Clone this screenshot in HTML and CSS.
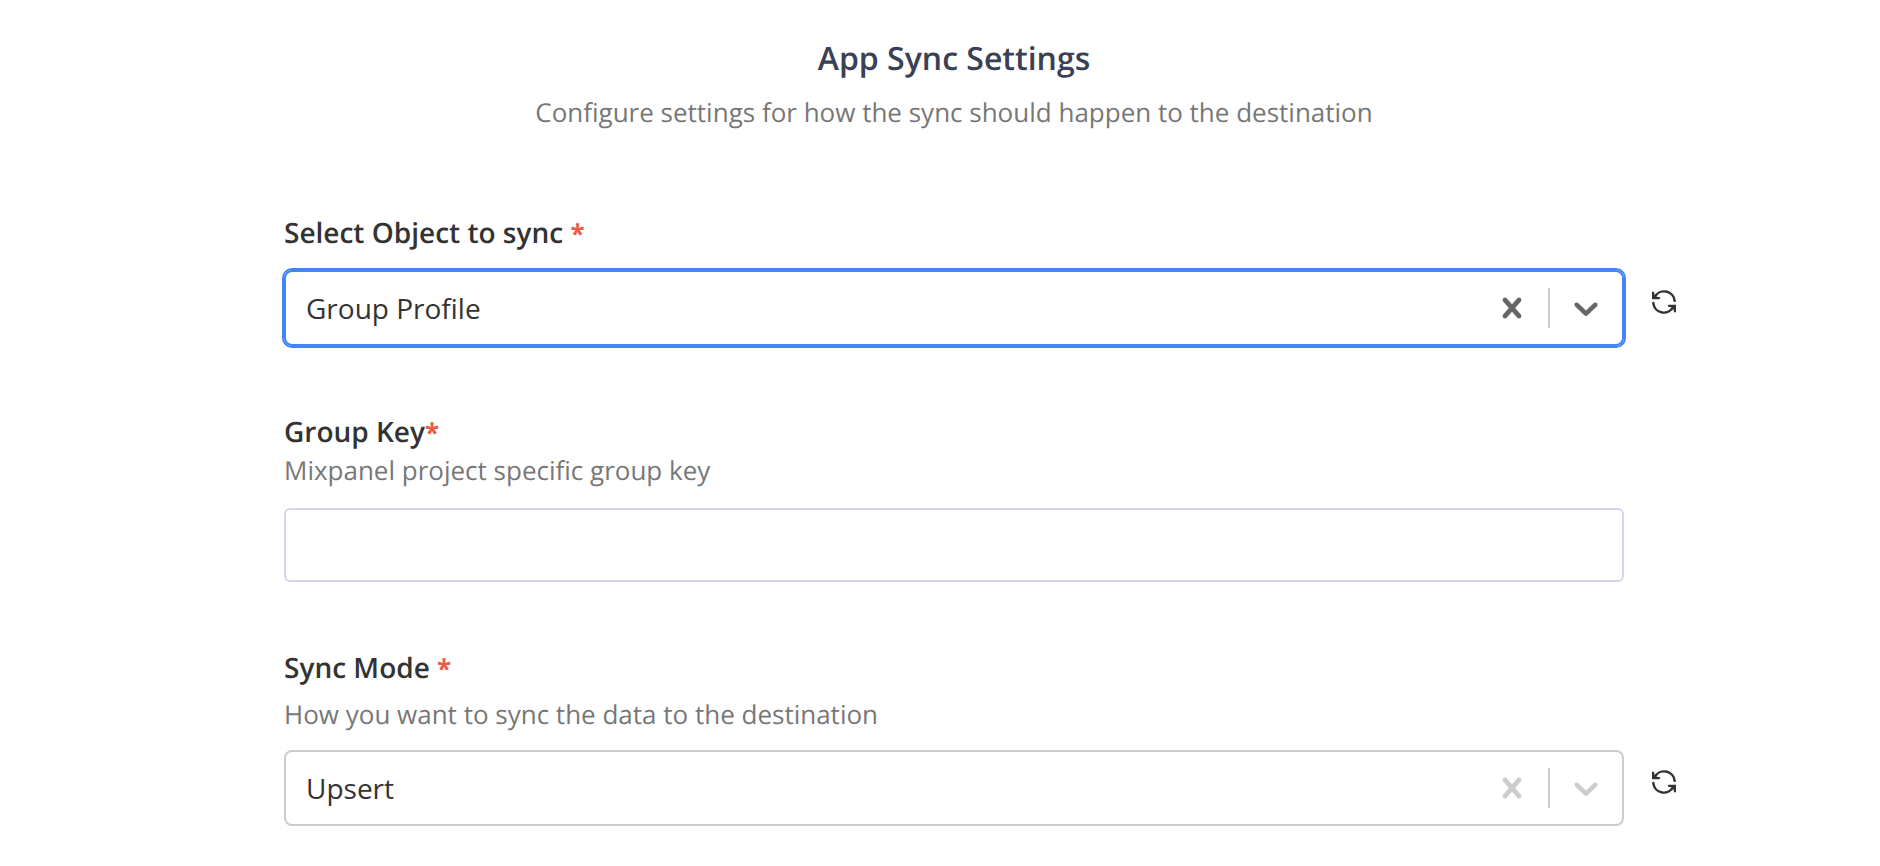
FILE: index.html
```html
<!DOCTYPE html>
<html lang="en">
<head>
<meta charset="utf-8">
<meta name="viewport" content="width=device-width, initial-scale=1">
<title>App Sync Settings</title>
<link rel="stylesheet" href="styles.css">
</head>
<body>
<svg class="sprite" aria-hidden="true">
  <symbol id="icon-clear" viewBox="0 0 20 20"><path d="M14.348 14.849c-0.469 0.469-1.229 0.469-1.697 0l-2.651-3.030-2.651 3.029c-0.469 0.469-1.229 0.469-1.697 0-0.469-0.469-0.469-1.229 0-1.697l2.758-3.15-2.759-3.152c-0.469-0.469-0.469-1.228 0-1.697s1.228-0.469 1.697 0l2.652 3.031 2.651-3.031c0.469-0.469 1.228-0.469 1.697 0s0.469 1.229 0 1.697l-2.758 3.152 2.758 3.15c0.469 0.469 0.469 1.229 0 1.698z"/></symbol>
  <symbol id="icon-down" viewBox="0 0 20 20"><path d="M4.516 7.548c0.436-0.446 1.043-0.481 1.576 0l3.908 3.747 3.908-3.747c0.533-0.481 1.141-0.446 1.574 0 0.436 0.445 0.408 1.197 0 1.615-0.406 0.418-4.695 4.502-4.695 4.502-0.217 0.223-0.502 0.335-0.787 0.335s-0.57-0.112-0.789-0.335c0 0-4.287-4.084-4.695-4.502s-0.436-1.170 0-1.615z"/></symbol>
  <symbol id="icon-sync" viewBox="0 0 24 24">
    <g fill="none" stroke="currentColor" stroke-width="2.5" stroke-linecap="round">
      <path d="M2.6 7.4A10.6 10.6 0 0 1 22.7 11"/>
      <path d="M21.4 16.6A10.6 10.6 0 0 1 1.3 13"/>
    </g>
    <path d="M0 2.4Q0 1.4 1 1.4Q2 1.4 2.2 2.4L2.6 5L4.6 6.8L7.2 7.1Q8.2 7.4 8.2 8.3Q8.1 9.2 7 9.2H0Z"/>
    <path d="M24 21.6Q24 22.6 23 22.6Q22 22.6 21.8 21.6L21.4 19L19.4 17.2L16.8 16.9Q15.8 16.6 15.8 15.7Q15.9 14.8 17 14.8H24Z"/>
  </symbol>
</svg>
<main class="page">
  <header class="heading">
    <h1 class="title">App Sync Settings</h1>
    <p class="subtitle">Configure settings for how the sync should happen to the destination</p>
  </header>

  <section class="field">
    <label class="label label-spaced" for="object">Select Object to sync <span class="required">*</span></label>
    <div class="picker picker-active">
      <select class="select" id="object"><option>Group Profile</option></select>
      <div class="indicators">
        <button class="clear" type="button" aria-label="Clear object"><svg class="icon"><use href="#icon-clear"/></svg></button>
        <span class="separator"></span>
        <span class="arrow"><svg class="icon"><use href="#icon-down"/></svg></span>
      </div>
    </div>
    <button class="refresh" type="button" aria-label="Refresh objects"><svg class="sync"><use href="#icon-sync"/></svg></button>
  </section>

  <section class="field">
    <label class="label" for="group-key">Group Key<span class="required">*</span></label>
    <p class="hint" id="key-hint">Mixpanel project specific group key</p>
    <input class="input" id="group-key" type="text" aria-describedby="key-hint">
  </section>

  <section class="field">
    <label class="label" for="mode">Sync Mode <span class="required">*</span></label>
    <p class="hint hint-spaced" id="mode-hint">How you want to sync the data to the destination</p>
    <div class="picker">
      <select class="select" id="mode" aria-describedby="mode-hint"><option>Upsert</option></select>
      <div class="indicators">
        <button class="clear" type="button" aria-label="Clear sync mode"><svg class="icon"><use href="#icon-clear"/></svg></button>
        <span class="separator"></span>
        <span class="arrow"><svg class="icon"><use href="#icon-down"/></svg></span>
      </div>
    </div>
    <button class="refresh" type="button" aria-label="Refresh sync modes"><svg class="sync"><use href="#icon-sync"/></svg></button>
  </section>
</main>
</body>
</html>
```

FILE: styles.css
```css
* {
  box-sizing: border-box;
}

body {
  margin: 0;
  background: #fff;
  color: #333;
  font-family: "Open Sans", "Noto Sans", sans-serif;
  font-size: 28px;
  text-rendering: geometricPrecision;
}

.sprite {
  display: none;
}

.page {
  display: grid;
  grid-template-columns: 284fr 1340fr 256fr;
  padding: 37px 0 40px;
}

.heading {
  grid-column: 2;
  text-align: center;
}

.title {
  margin: 0;
  color: #3a4055;
  font-size: 32px;
  font-weight: 600;
  line-height: 44px;
}

.subtitle {
  margin: 13px 0 0;
  color: #777;
  font-size: 26px;
  line-height: 36px;
}

.field {
  display: grid;
  grid-column: 1 / -1;
  grid-template-columns: subgrid;
  align-items: center;
  margin-top: 66px;
}

.heading + .field {
  margin-top: 83px;
}

.label,
.hint,
.picker,
.input {
  grid-column: 2;
}

.label {
  font-weight: 600;
  line-height: 40px;
}

.label-spaced {
  padding-bottom: 17px;
}

.required {
  color: #eb5a46;
  font-size: 26px;
  font-weight: 700;
}

.hint {
  margin: 0 0 20px;
  color: #777;
  font-size: 26px;
  line-height: 36px;
}

.hint-spaced {
  margin: 8px 0 18px;
}

.picker {
  display: grid;
  min-height: 76px;
  border: 2px solid #ccc;
  border-radius: 8px;
  color: #ccc;
}

.picker-active {
  border-color: #4285f8;
  box-shadow: 0 0 0 2px #4285f8;
  color: #666;
}

.select {
  grid-area: 1 / 1;
  width: 100%;
  padding: 0 160px 0 20px;
  border: 0;
  border-radius: 6px;
  outline: 0;
  appearance: none;
  background: transparent;
  color: #333;
  font: inherit;
}

.indicators {
  display: flex;
  grid-area: 1 / 1;
  justify-self: end;
  align-items: center;
  pointer-events: none;
}

.clear,
.arrow {
  display: flex;
  padding: 16px;
  border: 0;
  background: none;
  color: inherit;
  pointer-events: auto;
}

.arrow {
  pointer-events: none;
}

.icon {
  width: 40px;
  height: 40px;
  fill: currentColor;
}

.separator {
  align-self: stretch;
  width: 2px;
  margin: 16px 0;
  background: #ccc;
}

.input {
  width: 100%;
  height: 74px;
  padding: 0 20px;
  border: 2px solid #d5d6eb;
  border-radius: 6px;
  background: #fff;
  color: #333;
  font: inherit;
}

.refresh {
  display: flex;
  grid-column: 3;
  justify-self: start;
  margin: 0 0 12px 28px;
  padding: 0;
  border: 0;
  background: none;
  color: #333;
}

.sync {
  width: 24px;
  height: 24px;
  fill: currentColor;
}
```
